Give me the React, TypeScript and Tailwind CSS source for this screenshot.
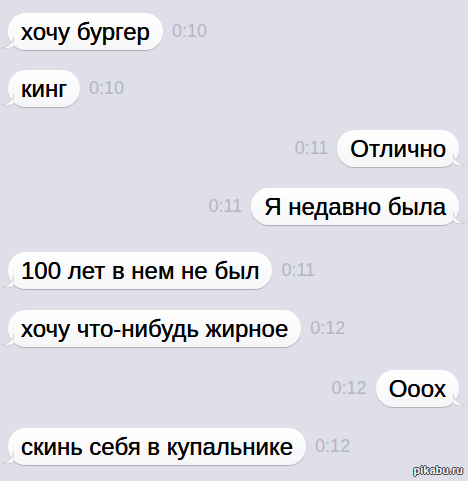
const font = { fontFamily: '"Liberation Sans", Arial, sans-serif' }

type Msg = { text: string; time: string; out?: boolean; mt: string }

const messages: Msg[] = [
  { text: "хочу бургер", time: "0:10", mt: "mt-[13px]" },
  { text: "кинг", time: "0:10", mt: "mt-[20px]" },
  { text: "Отлично", time: "0:11", out: true, mt: "mt-[23px]" },
  { text: "Я недавно была", time: "0:11", out: true, mt: "mt-[21px]" },
  { text: "100 лет в нем не был", time: "0:11", mt: "mt-[27px]" },
  { text: "хочу что-нибудь жирное", time: "0:12", mt: "mt-[21px]" },
  { text: "Ooox", time: "0:12", out: true, mt: "mt-[23px]" },
  { text: "скинь себя в купальнике", time: "0:12", mt: "mt-[21px]" },
]

const Tail = ({ out }: { out?: boolean }) => (
  <svg
    width="12"
    height="12"
    viewBox="0 0 12 12"
    className={out ? "absolute -right-[6px] bottom-[1px]" : "absolute -left-[6px] bottom-[1px]"}
  >
    {out ? (
      <path d="M0 0 C1 6 4 9 12 11 C6 12 2 11 0 9 Z" fill="#fff" stroke="#c3c4cc" strokeWidth="0.8" />
    ) : (
      <path d="M12 0 C11 6 8 9 0 11 C6 12 10 11 12 9 Z" fill="#fff" stroke="#c3c4cc" strokeWidth="0.8" />
    )}
  </svg>
)

const Bubble = ({ m }: { m: Msg }) => (
  <div className={`flex items-center ${m.out ? "justify-end pr-[9px]" : "pl-[8px]"} ${m.mt}`}>
    {m.out && <span className="mr-[9px] text-[18px] text-[#b4b6c1]">{m.time}</span>}
    <div className="relative">
      <div className="relative z-10 h-[37px] rounded-[18px] bg-gradient-to-b from-white to-[#f6f6f8] px-[13px] flex items-center text-[24px] text-black [text-shadow:_0_0_0.4px_#000] shadow-[0_1px_1px_rgba(0,0,0,0.22)]">
        {m.text}
      </div>
      <div className="absolute inset-0 z-20 pointer-events-none">
        <Tail out={m.out} />
      </div>
    </div>
    {!m.out && <span className="ml-[9px] text-[18px] text-[#b4b6c1]">{m.time}</span>}
  </div>
)

export default function App() {
  return (
    <div style={font} className="relative w-[468px] h-[481px] overflow-hidden bg-[#dedfe9] flex flex-col">
      {messages.map((m, i) => (
        <Bubble key={i} m={m} />
      ))}
      <span className="absolute right-[5px] bottom-[3px] text-[11px] font-bold text-white [text-shadow:_-1px_0_#333,1px_0_#333,0_-1px_#333,0_1px_#333]">
        pikabu.ru
      </span>
    </div>
  )
}
